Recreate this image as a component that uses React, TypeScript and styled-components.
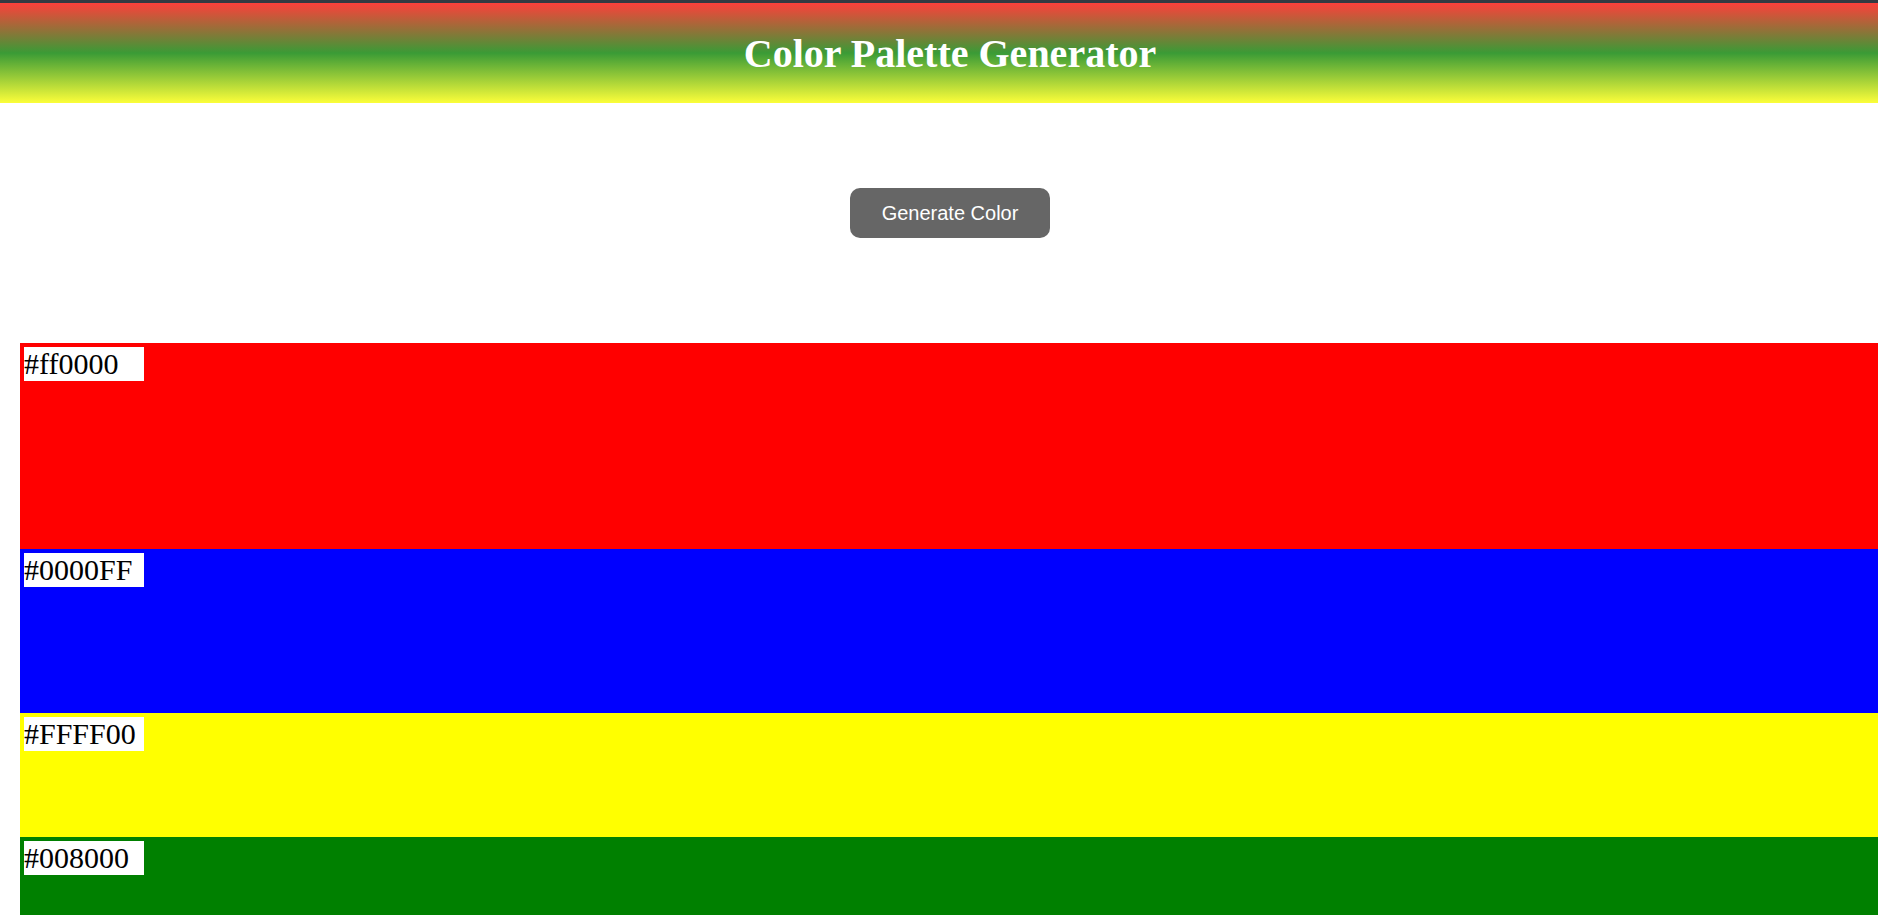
import React from "react";
import styled, { createGlobalStyle } from "styled-components";

const GlobalStyle = createGlobalStyle`
  html, body {
    margin: 0;
    padding: 0;
    overflow: hidden;
    background: #ffffff;
  }
  body {
    font-family: "Liberation Serif", "Times New Roman", serif;
  }
`;

const Page = styled.div`
  width: 1900px;
  display: flex;
  flex-direction: column;
`;

const TopStrip = styled.div`
  height: 3px;
  background: #353a42;
`;

const Header = styled.header`
  height: 100px;
  display: flex;
  align-items: center;
  justify-content: center;
  background: linear-gradient(to bottom, #fc403b 0%, #3a9b36 50%, #fcfe3a 100%);
`;

const Title = styled.h1`
  margin: 0;
  font-family: "Liberation Serif", "Times New Roman", serif;
  font-weight: bold;
  font-size: 40px;
  color: #ffffff;
`;

const Controls = styled.div`
  display: flex;
  justify-content: center;
  padding: 85px 0 105px;
`;

const GenerateButton = styled.button`
  width: 200px;
  height: 50px;
  border: none;
  border-radius: 10px;
  background: #666666;
  color: #ffffff;
  font-family: "Liberation Sans", Arial, sans-serif;
  font-size: 20px;
  cursor: pointer;
`;

const Palette = styled.div`
  display: flex;
  flex-direction: column;
  margin-left: 20px;
`;

const Swatch = styled.div<{ $color: string; $height: number }>`
  background: ${(p) => p.$color};
  height: ${(p) => p.$height}px;
  padding: 4px;
  box-sizing: border-box;
`;

const Label = styled.span`
  display: block;
  width: 120px;
  height: 34px;
  background: #ffffff;
  color: #000000;
  font-family: "Liberation Serif", "Times New Roman", serif;
  font-size: 30px;
  line-height: 34px;
  white-space: nowrap;
`;

const colors = [
  { hex: "#ff0000", label: "#ff0000", height: 206 },
  { hex: "#0000FF", label: "#0000FF", height: 164 },
  { hex: "#FFFF00", label: "#FFFF00", height: 124 },
  { hex: "#008000", label: "#008000", height: 84 },
];

export default function App() {
  return (
    <>
      <GlobalStyle />
      <Page>
        <TopStrip />
        <Header>
          <Title>Color Palette Generator</Title>
        </Header>
        <Controls>
          <GenerateButton>Generate Color</GenerateButton>
        </Controls>
        <Palette>
          {colors.map((c) => (
            <Swatch key={c.label} $color={c.hex} $height={c.height}>
              <Label>{c.label}</Label>
            </Swatch>
          ))}
        </Palette>
      </Page>
    </>
  );
}
